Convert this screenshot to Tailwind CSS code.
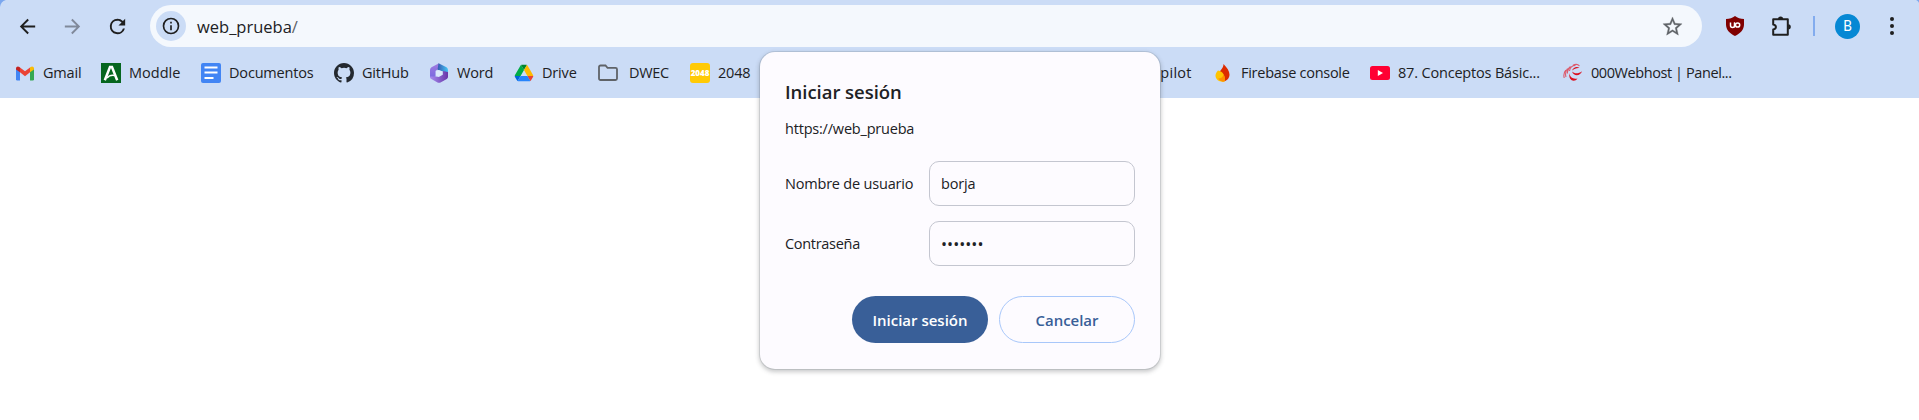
<!DOCTYPE html>
<html lang="es">
<head>
<meta charset="utf-8">
<title>web_prueba</title>
<script src="https://cdn.jsdelivr.net/npm/@tailwindcss/browser@4"></script>
</head>
<body class="h-[420px] w-[1919px] overflow-hidden bg-white font-['Open_Sans','Noto_Sans',sans-serif] text-[#202124]">
<header class="relative h-[98px] bg-[#cbdcf6]">
  <svg class="absolute left-0 top-0 size-[7px]" viewBox="0 0 6 6"><path d="M0 0h5C2 1 .5 3 0 6z" fill="#7ba7ee"/></svg>
  <svg class="absolute right-0 top-0 size-[3px]" viewBox="0 0 3 3"><path d="M0 0h3v3C2.500 1.500 1.500.5 0 0z" fill="#7ba7ee"/></svg>

  <div class="flex h-[52px] items-center">
    <svg class="ml-4 size-[23px]" viewBox="0 0 24 24" fill="#1f1f1f"><path d="M20 11H7.830l5.590-5.590L12 4l-8 8 8 8 1.410-1.410L7.830 13H20v-2z"/></svg>
    <svg class="ml-[22px] size-[23px]" viewBox="0 0 24 24" fill="#80899a"><path d="M4 13h12.170l-5.590 5.590L12 20l8-8-8-8-1.410 1.410L16.170 11H4v2z"/></svg>
    <svg class="ml-[22px] size-[23px]" viewBox="0 0 24 24" fill="#1f1f1f"><path d="M17.650 6.350A7.960 7.960 0 0 0 12 4a8 8 0 1 0 7.730 10h-2.080A6 6 0 1 1 12 6c1.660 0 3.140.69 4.220 1.780L13 11h7V4l-2.350 2.350z"/></svg>
    <div class="ml-[21px] flex h-[42px] w-[1552px] items-center rounded-full bg-[#f4f8fd] pl-1.5">
      <div class="flex size-[30px] items-center justify-center rounded-full bg-[#cbdcf6]">
        <svg class="size-5" viewBox="0 0 24 24" fill="#1f1f1f"><path d="M11 7h2v2h-2zm0 4h2v6h-2zm1-9a10 10 0 1 0 0 20 10 10 0 0 0 0-20zm0 18a8 8 0 1 1 0-16 8 8 0 0 1 0 16z"/></svg>
      </div>
      <span class="ml-[11px] mt-0.5 whitespace-nowrap text-[16.500px] leading-6">web_prueba<span class="text-[#5f6368]">/</span></span>
      <svg class="ml-auto mr-[18px] size-[23px]" viewBox="0 0 24 24" fill="#5f6368" stroke="#5f6368" stroke-width=".3"><path d="m22 9.240-7.190-.62L12 2 9.190 8.630 2 9.240l5.460 4.730L5.820 21 12 17.270 18.180 21l-1.630-7.030L22 9.240zM12 15.400l-3.760 2.270 1-4.280-3.320-2.880 4.380-.38L12 6.100l1.710 4.040 4.380.38-3.320 2.880 1 4.280L12 15.400z"/></svg>
    </div>
    <svg class="ml-[23px] size-5" viewBox="0 0 20 20"><path d="M10 0c2.500 2 5.500 2.800 9 3v5.500c0 5-3.500 9-9 11.500C4.500 17.500 1 13.500 1 8.500V3c3.500-.2 6.500-1 9-3z" fill="#800000"/><path d="M5.500 6.500v3a2 2 0 0 0 4 0v-3" fill="none" stroke="#fff" stroke-width="1.500"/><path d="M9.500 6.500v5" stroke="#fff" stroke-width="1"/><circle cx="12.600" cy="9" r="2.100" fill="none" stroke="#fff" stroke-width="1.500"/></svg>
    <svg class="ml-[26px] size-[22px]" viewBox="0 0 22 22"><path d="M2.200 4.200h14.600v15.600H2.200v-5.300c3.600-.6 3.600-4.400 0-5z" fill="none" stroke="#1f1f1f" stroke-width="2" stroke-linejoin="round"/><path d="M7 4a2.600 2.600 0 0 1 5.200 0zM17.200 9.200a2.600 2.600 0 0 1 0 5.200z" fill="#1f1f1f"/></svg>
    <div class="ml-5 h-5 w-0.5 bg-[#83acee]"></div>
    <div class="ml-5 flex size-[25px] items-center justify-center rounded-full bg-[#0688d4] font-['Roboto'] text-[14px] text-white">B</div>
    <svg class="ml-[30px] h-5 w-1" viewBox="0 0 4 20" fill="#1f1f1f"><circle cx="2" cy="3" r="2"/><circle cx="2" cy="10" r="2"/><circle cx="2" cy="17" r="2"/></svg>
  </div>

  <nav class="flex h-[42px] items-center whitespace-nowrap pl-[15px] text-[14.500px] leading-5 tracking-[-0.180px]">
    <div class="flex w-[86px] items-center gap-2">
      <svg class="size-5" viewBox="0 0 20 20"><path d="M1 5l4 3v9.500H2.200A1.200 1.200 0 0 1 1 16.300z" fill="#4285f4"/><path d="M19 5l-4 3v9.500h2.800a1.200 1.200 0 0 0 1.200-1.200z" fill="#34a853"/><path d="M5 4.500l5 3.800 5-3.800v4.800l-5 3.900-5-3.900z" fill="#ea4335"/><path d="M1 5.500C1 3.500 3 2.800 4.400 3.900L5 4.400v4.900L1 6.500z" fill="#c5221f"/><path d="M19 5.500c0-2-2-2.700-3.400-1.600l-.6.500v4.900l4-2.800z" fill="#fbbc04"/></svg>
      <span>Gmail</span>
    </div>
    <div class="flex w-[100px] items-center gap-2">
      <svg class="size-5" viewBox="0 0 20 20"><path fill="#06661f" d="M0 0h20v20H0z"/><path d="M3.800 17.200L9 4h2l5.200 13.200" fill="none" stroke="#fff" stroke-width="2.500"/><path d="M6 15c2-2.500 4.500-3.200 8-2.500" fill="none" stroke="#fff" stroke-width="1.600"/></svg>
      <span class="tracking-normal">Moddle</span>
    </div>
    <div class="flex w-[133px] items-center gap-2">
      <svg class="size-5" viewBox="0 0 20 20"><rect width="20" height="20" rx="2" fill="#4285f4"/><path d="M3.500 4.500h13M3.500 9.500h13M3.500 15h9" stroke="#fff" stroke-width="2"/></svg>
      <span>Documentos</span>
    </div>
    <div class="flex w-[95px] items-center gap-2">
      <svg class="size-5" viewBox="0 0 16 16" fill="#24292f"><path d="M8 0C3.580 0 0 3.580 0 8c0 3.540 2.290 6.530 5.470 7.590.4.070.55-.17.55-.38 0-.19-.01-.82-.01-1.490-2.010.37-2.530-.49-2.690-.94-.09-.23-.48-.94-.82-1.130-.28-.15-.68-.52-.01-.53.63-.01 1.080.58 1.230.82.72 1.210 1.870.87 2.330.66.07-.52.28-.87.51-1.070-1.780-.2-3.640-.89-3.640-3.950 0-.87.31-1.590.82-2.150-.08-.2-.36-1.020.08-2.120 0 0 .67-.21 2.200.82a7.600 7.600 0 0 1 4 0c1.530-1.040 2.200-.82 2.200-.82.44 1.100.16 1.920.08 2.120.51.56.82 1.270.82 2.150 0 3.070-1.870 3.750-3.650 3.950.29.25.54.73.54 1.480 0 1.070-.01 1.930-.01 2.200 0 .21.15.46.55.38A8.010 8.010 0 0 0 16 8c0-4.420-3.580-8-8-8z"/></svg>
      <span>GitHub</span>
    </div>
    <div class="flex w-[85px] items-center gap-2">
      <svg class="size-5" viewBox="0 0 20 20"><defs><linearGradient id="m1" x1="0" y1="0" x2="0" y2="1"><stop stop-color="#a07be0"/><stop offset="1" stop-color="#7a6ae0"/></linearGradient><linearGradient id="m2"><stop stop-color="#3558b0"/><stop offset="1" stop-color="#45c6f5"/></linearGradient><linearGradient id="m3"><stop stop-color="#a78df0"/><stop offset="1" stop-color="#6936a8"/></linearGradient></defs><path d="M10 .3L2.500 4.300Q1 5.300 1 7v7.500l5.500-.8V8l5-4z" fill="url(#m1)"/><path d="M9.500.3l8 4Q19 5.300 19 7v5.500l-5.200-4.300L8.500 7z" fill="url(#m2)"/><path d="M19 9v5q0 1.200-1.200 2l-6.300 3.500q-1.500.7-3 0L1.500 15.500 1 13.500l5.500 0L9.800 14l4-2.200V8z" fill="url(#m3)"/><path d="M7 8.300l2.800-1.300 3.500 1.500v3l-3.500 2-2.800-1z" fill="#dbe8fb"/></svg>
      <span>Word</span>
    </div>
    <div class="flex w-[84px] items-center gap-2">
      <svg class="size-5" viewBox="-3.500 -5 94.300 88"><path d="m6.600 66.850 3.850 6.650c.8 1.400 1.950 2.500 3.300 3.300L27.500 53H0c0 1.550.4 3.100 1.200 4.500z" fill="#0066da"/><path d="M43.650 25 29.900 1.200c-1.350.8-2.500 1.900-3.300 3.300l-25.400 44A9.060 9.060 0 0 0 0 53h27.500z" fill="#00ac47"/><path d="M73.550 76.800c1.350-.8 2.500-1.900 3.300-3.300l1.600-2.750L86.100 57.500c.8-1.400 1.200-2.950 1.200-4.500H59.800l5.850 11.500z" fill="#ea4335"/><path d="M43.650 25 57.400 1.200C56.050.4 54.500 0 52.900 0H34.400c-1.600 0-3.150.45-4.500 1.200z" fill="#00832d"/><path d="M59.800 53H27.500L13.750 76.800c1.350.8 2.900 1.200 4.500 1.200h50.800c1.600 0 3.150-.45 4.500-1.200z" fill="#2684fc"/><path d="m73.400 26.500-12.700-22c-.8-1.400-1.950-2.500-3.300-3.300L43.650 25 59.800 53h27.450c0-1.550-.4-3.100-1.200-4.500z" fill="#ffba00"/></svg>
      <span>Drive</span>
    </div>
    <div class="flex w-[92px] items-center gap-[11px]">
      <svg class="size-5" viewBox="0 0 20 20"><path d="M1 4a1.500 1.500 0 0 1 1.500-1.500h5l2 2.300h8A1.500 1.500 0 0 1 19 6.300v9.200a1.500 1.500 0 0 1-1.500 1.500h-15A1.500 1.500 0 0 1 1 15.500z" fill="none" stroke="#5f6368" stroke-width="1.800"/></svg>
      <span class="tracking-[-0.300px]">DWEC</span>
    </div>
    <div class="flex w-[445px] items-center gap-2">
      <span class="flex size-5 items-center justify-center rounded-[3px] bg-[#ffca05] text-[8px] font-extrabold tracking-normal text-white">2048</span>
      <span>2048</span>
    </div>
    <div class="flex w-[78px]">
      <span class="ml-[7px] tracking-[0.250px]">Copilot</span>
    </div>
    <div class="flex w-[157px] items-center gap-2">
      <svg class="size-5" viewBox="0 0 20 20"><path d="M10.500 1c3.500 3.500 6 7 6 10.500 0 4-3 7-7 7-3-1-5-4-4.500-7C6 8 10.500 6 10.500 1z" fill="#dd2c00"/><path d="M5 7.500c5 1 7.500 5 6.500 11-5 1-9-2-9-6 0-2 1.300-3.800 2.500-5z" fill="#ffc400"/><path d="M10.500 11.500c1.500 2 1.800 4.500 1 7-3 .4-5-1-6.300-3 3 0 4.700-1.500 5.300-4z" fill="#ff9100"/></svg>
      <span class="tracking-[-0.270px]">Firebase console</span>
    </div>
    <div class="flex w-[193px] items-center gap-2">
      <svg class="size-5" viewBox="0 0 20 20"><rect y="3" width="20" height="14" rx="2.500" fill="#ff0033"/><path d="M7.800 7v6l5.200-3z" fill="#fff"/></svg>
      <span>87. Conceptos Básic...</span>
    </div>
    <div class="flex items-center gap-2">
      <svg class="size-5" viewBox="0 0 20 20" fill="#dc0f1e"><path d="M9 7.500c1.500-3.500 5-4.500 7.500-2.500-3-.3-5 .5-7.500 2.500zM9 8.500c2.500 2.500 6.500 2.500 10-.3-1 4.300-8 6-10 .3zM6.500 10c0 4 3.500 6.500 8 5.500-3 4.500-9.500 2-8-5.500z"/><path d="M6.500 8c.5-3.500 3-5.500 6-5.500M4.500 10.500c-.5-3 .5-5 3-7M3 14c-1-3.500-.5-6 1.500-8.500M1.200 15C.5 12 1 9 2.800 7M10 2.200c2.500-1.200 5-1 6.500.8" fill="none" stroke="#dc5a6b" stroke-width="1.100"/></svg>
      <span class="tracking-[-0.420px]">000Webhost | Panel...</span>
    </div>
  </nav>
</header>

<div role="dialog" class="absolute left-[760px] top-[52px] flex h-[317px] w-[400px] flex-col rounded-[15px] bg-[#fdfbff] px-[25px] shadow-[0_0_0_1px_rgba(60,70,80,0.120),0_2px_4px_1px_rgba(60,64,67,0.280)]">
  <h1 class="mt-[27px] text-[18.500px] font-semibold leading-[26px] tracking-[-0.040px]"><span>Iniciar sesión</span></h1>
  <p class="mt-[14px] text-[14.500px] leading-5 tracking-[-0.200px]"><span>https://web_prueba</span></p>
  <div class="mt-[22px] flex items-center justify-between text-[14.500px] tracking-[-0.200px]">
    <label><span>Nombre de usuario</span></label>
    <div class="flex h-[45px] w-[206px] items-center rounded-[10px] border border-[#c4c6d0] px-[11px]"><span>borja</span></div>
  </div>
  <div class="mt-[15px] flex items-center justify-between text-[14.500px] tracking-[-0.300px]">
    <label><span>Contraseña</span></label>
    <div class="flex h-[45px] w-[206px] items-center rounded-[10px] border border-[#c4c6d0] px-[11px]"><span class="text-[16px] tracking-[0.050px]">•••••••</span></div>
  </div>
  <div class="mt-[30px] flex justify-end gap-[11px] text-[15px] font-semibold">
    <button class="h-[47px] w-[136px] rounded-full bg-[#395f98] pt-px text-white"><span>Iniciar sesión</span></button>
    <button class="h-[47px] w-[136px] rounded-full border border-[#a8c7fa] pt-px font-semibold tracking-[-0.050px] text-[#395f98]"><span>Cancelar</span></button>
  </div>
</div>
</body>
</html>
